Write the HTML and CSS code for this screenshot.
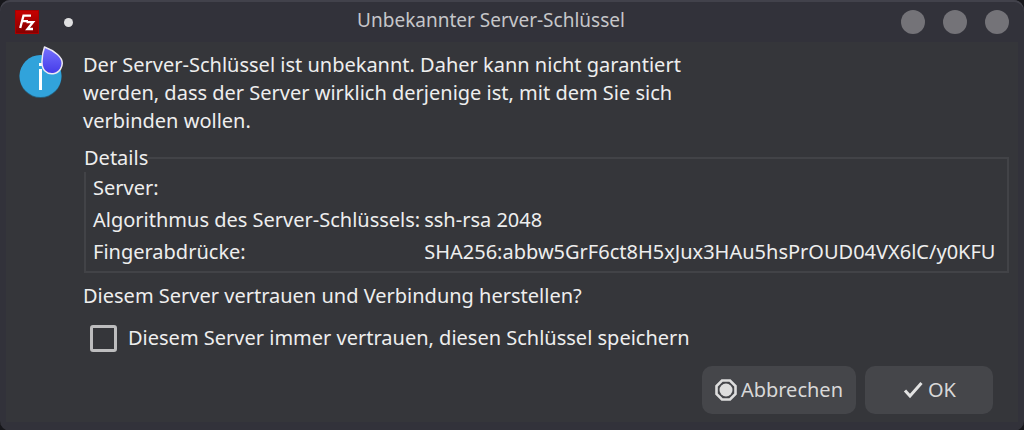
FILE: index.html
```html
<!DOCTYPE html>
<html lang="de">
<head>
<meta charset="utf-8">
<title>Unbekannter Server-Schlüssel</title>
<link rel="stylesheet" href="styles.css">
</head>
<body>
<div class="window">
  <header class="titlebar">
    <div class="titlebar-left">
      <svg class="app-icon" width="24" height="24" viewBox="0 0 24 24" aria-hidden="true">
        <defs>
          <linearGradient id="red" x1="0" y1="0" x2="0" y2="1">
            <stop offset="0" stop-color="#c90000"/>
            <stop offset="1" stop-color="#830000"/>
          </linearGradient>
        </defs>
        <rect width="24" height="24" fill="url(#red)"/>
        <rect x=".5" y=".5" width="23" height="23" fill="none" stroke="#a80000"/>
        <path d="M16 5.700H8.500L5.200 18M7.200 11.200H13M11.500 12.200H18L12.500 19H18" fill="none" stroke="#fff" stroke-width="2.300"/>
      </svg>
      <span class="pin"></span>
    </div>
    <h1 class="title">Unbekannter Server-Schlüssel</h1>
    <div class="window-controls">
      <button class="control" type="button" aria-label="Minimieren"></button>
      <button class="control" type="button" aria-label="Maximieren"></button>
      <button class="control" type="button" aria-label="Schließen"></button>
    </div>
  </header>
  <main class="content">
    <div class="info">
      <svg width="46" height="54" viewBox="0 0 46 54" aria-hidden="true">
        <defs>
          <linearGradient id="drop" x1="0" y1="0" x2="0" y2="1">
            <stop offset="0" stop-color="#7772ff"/>
            <stop offset="1" stop-color="#443be8"/>
          </linearGradient>
        </defs>
        <circle cx="21.500" cy="31" r="21" fill="#26617f"/>
        <circle cx="21.500" cy="30" r="21" fill="#31a3db"/>
        <path d="M20 17h3v3h-3zM20 23h3v21h-3z" fill="#fff"/>
        <path d="M25.500 1C31 3 35 5.500 38.500 8.500C43 12.500 44.500 18 41.500 23C38 28.500 30.500 29.500 26 25C23.500 22.500 22.800 19 23 15C23.200 10 24 5 25.500 1Z" fill="url(#drop)" stroke="#ece9f3" stroke-width="1.500" stroke-linejoin="round"/>
      </svg>
    </div>
    <form class="body">
      <p class="message">Der Server-Schlüssel ist unbekannt. Daher kann nicht garantiert werden, dass der Server wirklich derjenige ist, mit dem Sie sich verbinden wollen.</p>
      <fieldset class="details">
        <legend class="legend">Details</legend>
        <dl class="rows">
          <dt>Server:</dt><dd></dd>
          <dt>Algorithmus des Server-Schlüssels:</dt><dd>ssh-rsa 2048</dd>
          <dt>Fingerabdrücke:</dt><dd>SHA256:abbw5GrF6ct8H5xJux3HAu5hsPrOUD04VX6lC/y0KFU</dd>
        </dl>
      </fieldset>
      <p class="question">Diesem Server vertrauen und Verbindung herstellen?</p>
      <label class="trust" for="always"><input class="checkbox" type="checkbox" id="always">Diesem Server immer vertrauen, diesen Schlüssel speichern</label>
      <div class="actions">
        <button class="button" type="button">
          <svg width="22" height="22" viewBox="0 0 22 22" aria-hidden="true">
            <path d="M7 1.500H15L20.500 7V15L15 20.500H7L1.500 15V7Z" fill="none" stroke="#dedede" stroke-width="2.600"/>
            <circle cx="11" cy="11" r="6.500" fill="#dedede"/>
          </svg>Abbrechen</button>
        <button class="button button-ok" type="button">
          <svg width="22" height="22" viewBox="0 0 22 22" aria-hidden="true">
            <path d="M3 11.500L8 17L19.500 4" fill="none" stroke="#e2e2e2" stroke-width="3"/>
          </svg>OK</button>
      </div>
    </form>
  </main>
</div>
</body>
</html>
```
FILE: styles.css
```css
* {
  box-sizing: border-box;
}

body {
  margin: 0;
  background: #17171b;
  color: #eeeeee;
  font: 20px/28px "Noto Sans", sans-serif;
}

.window {
  min-height: 100vh;
  display: flex;
  flex-direction: column;
  padding: 0 6px 9px;
  background: #32323a;
  border-radius: 10px;
  box-shadow: inset 0 2px 0 #42424b;
}

.titlebar {
  height: 42px;
  display: grid;
  grid-template-columns: 1fr auto 1fr;
  align-items: center;
  padding: 2px 9px 0;
}

.titlebar-left {
  display: flex;
  align-items: center;
  gap: 25px;
}

.app-icon {
  display: block;
}

.pin {
  width: 9px;
  height: 9px;
  border-radius: 50%;
  background: #e0e0e1;
}

.title {
  margin: 0;
  padding-bottom: 4px;
  padding-right: 42px;
  color: #c6c6c9;
  font-size: 19px;
  font-weight: 400;
}

.window-controls {
  display: flex;
  justify-content: flex-end;
  gap: 18px;
}

.control {
  width: 24px;
  height: 24px;
  padding: 0;
  border: 0;
  border-radius: 50%;
  background: #747378;
}

.content {
  flex: 1;
  display: flex;
  gap: 18px;
  padding: 4px 9px 8px 13px;
  background: #35363a;
}

.info {
  flex: none;
}

.body {
  flex: 1;
  display: flex;
  flex-direction: column;
  align-items: flex-start;
  padding-top: 5px;
}

.message {
  width: 600px;
  max-width: 100%;
  margin: 0 0 9px;
}

.details {
  align-self: stretch;
  min-width: 0;
  margin: 0 0 0 1px;
  padding: 2px 7px 5px;
  border: 2px solid #424347;
}

.legend {
  margin-left: -9px;
  padding: 0;
}

.rows {
  display: grid;
  grid-template-columns: auto 1fr;
  gap: 4px 4px;
  margin: 0;
}

.rows dt {
  white-space: nowrap;
}

.rows dd {
  margin: 0;
  overflow-wrap: anywhere;
}

.question {
  margin: 9px 0 0;
}

.trust {
  display: flex;
  align-items: center;
  gap: 11px;
  margin: 14px 0 0 7px;
}

.checkbox {
  appearance: none;
  width: 27px;
  height: 27px;
  margin: 0;
  border: 3px solid #bdbdbe;
  border-radius: 3px;
}

.actions {
  align-self: flex-end;
  display: flex;
  gap: 9px;
  margin-top: 14px;
  padding-right: 16px;
}

.button {
  height: 48px;
  display: flex;
  align-items: center;
  justify-content: center;
  gap: 4px;
  padding: 0 13px;
  border: 0;
  border-radius: 10px;
  background: #45464a;
  color: #d8d8d8;
  font: inherit;
}

.button-ok {
  width: 128px;
}
```
